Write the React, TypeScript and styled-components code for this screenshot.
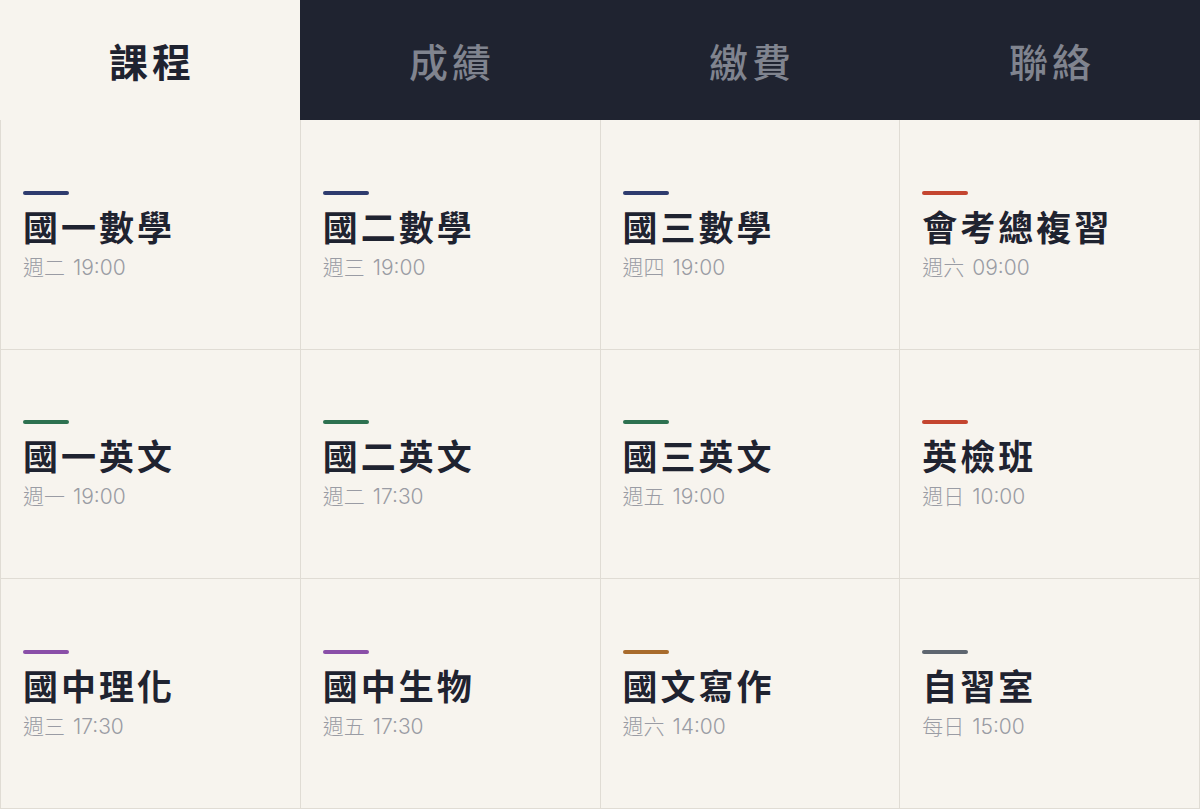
import styled, { createGlobalStyle } from 'styled-components'

const GlobalStyle = createGlobalStyle`
  html, body {
    margin: 0;
    padding: 0;
    background: #f7f4ee;
  }
  body {
    font-family: "Noto Sans CJK TC", "Noto Sans", sans-serif;
  }
`

const Page = styled.div`
  width: 1200px;
  height: 809px;
  display: flex;
  flex-direction: column;
  background: #f7f4ee;
  overflow: hidden;
`

const TabBar = styled.nav`
  height: 120px;
  display: grid;
  grid-template-columns: repeat(4, 1fr);
  background: #1f2330;
  flex-shrink: 0;
`

const Tab = styled.div<{ $active?: boolean }>`
  display: flex;
  align-items: center;
  justify-content: center;
  font-size: 39px;
  font-weight: ${(p) => (p.$active ? 700 : 500)};
  letter-spacing: 4px;
  padding-left: 4px;
  color: ${(p) => (p.$active ? '#1f2330' : '#80848f')};
  background: ${(p) => (p.$active ? '#f7f4ee' : 'transparent')};
`

const Grid = styled.div`
  flex: 1;
  display: grid;
  grid-template-columns: repeat(4, 1fr);
  grid-template-rows: repeat(3, 1fr);
  border-left: 1px solid #e0dcd4;
`

const Cell = styled.div`
  border-right: 1px solid #e0dcd4;
  border-bottom: 1px solid #e0dcd4;
  display: flex;
  flex-direction: column;
  justify-content: center;
  padding: 4px 22px 0;
`

const Accent = styled.span<{ $color: string }>`
  display: block;
  width: 46px;
  height: 4px;
  border-radius: 2px;
  background: ${(p) => p.$color};
  margin-bottom: 10px;
`

const Title = styled.div`
  font-size: 35px;
  font-weight: 700;
  letter-spacing: 3px;
  line-height: 42px;
  color: #1f2330;
`

const Time = styled.div`
  font-family: Inter, "Noto Sans CJK TC", sans-serif;
  font-size: 21px;
  font-weight: 300;
  line-height: 28px;
  word-spacing: 2px;
  color: #9a9ca4;
  margin-top: 7px;
`

const colors = {
  math: '#2e3b6e',
  english: '#2d7150',
  exam: '#c4452f',
  science: '#8a4fa8',
  chinese: '#a86b2c',
  study: '#5e6670',
}

const courses = [
  { name: '國一數學', time: '週二 19:00', color: colors.math },
  { name: '國二數學', time: '週三 19:00', color: colors.math },
  { name: '國三數學', time: '週四 19:00', color: colors.math },
  { name: '會考總複習', time: '週六 09:00', color: colors.exam },
  { name: '國一英文', time: '週一 19:00', color: colors.english },
  { name: '國二英文', time: '週二 17:30', color: colors.english },
  { name: '國三英文', time: '週五 19:00', color: colors.english },
  { name: '英檢班', time: '週日 10:00', color: colors.exam },
  { name: '國中理化', time: '週三 17:30', color: colors.science },
  { name: '國中生物', time: '週五 17:30', color: colors.science },
  { name: '國文寫作', time: '週六 14:00', color: colors.chinese },
  { name: '自習室', time: '每日 15:00', color: colors.study },
]

const tabs = ['課程', '成績', '繳費', '聯絡']

export default function App() {
  return (
    <Page>
      <GlobalStyle />
      <TabBar>
        {tabs.map((t, i) => (
          <Tab key={t} $active={i === 0}>
            {t}
          </Tab>
        ))}
      </TabBar>
      <Grid>
        {courses.map((c) => (
          <Cell key={c.name}>
            <Accent $color={c.color} />
            <Title>{c.name}</Title>
            <Time>{c.time}</Time>
          </Cell>
        ))}
      </Grid>
    </Page>
  )
}
